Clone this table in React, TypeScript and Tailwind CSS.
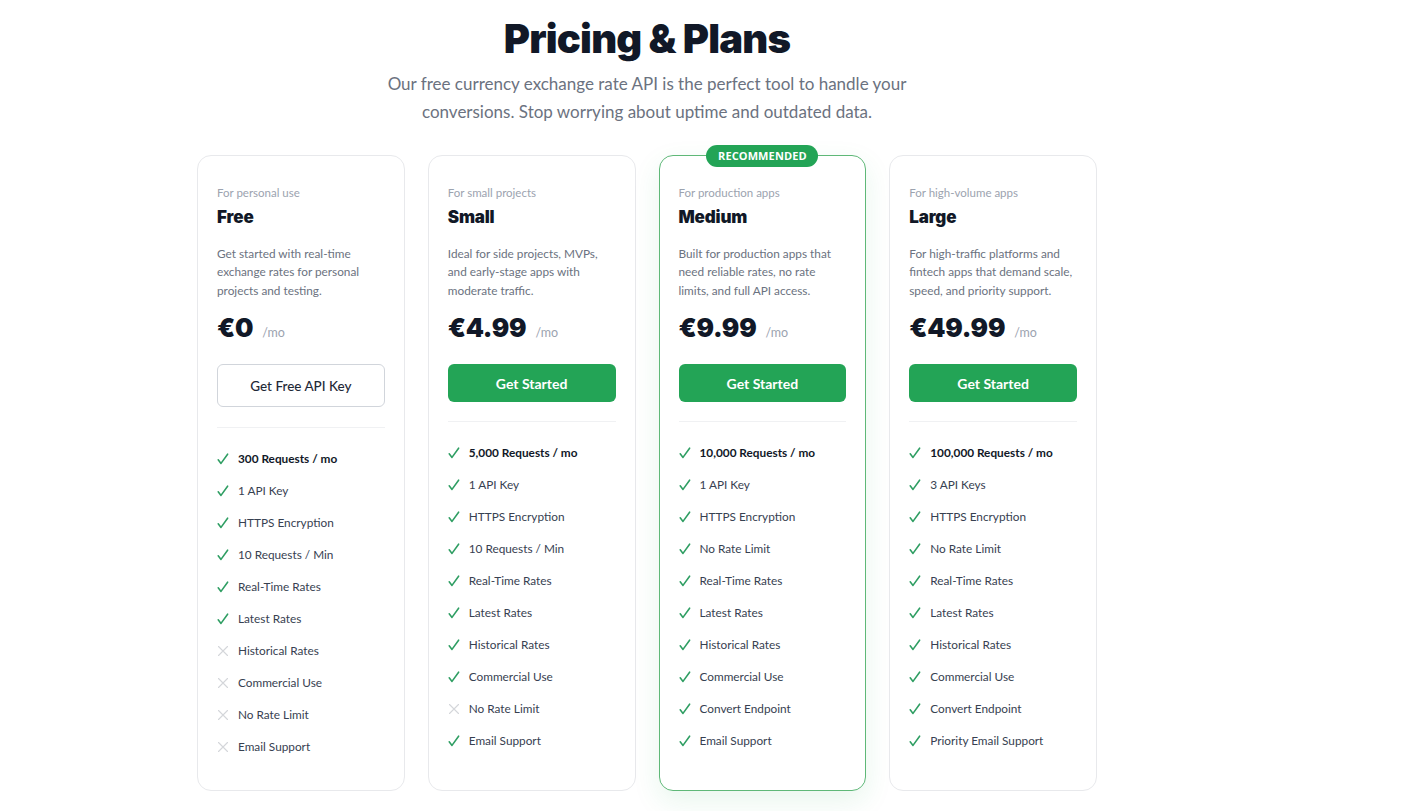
import React from "react";

type Feature = { label: string; ok: boolean; bold?: boolean };
type Plan = {
  tag: string;
  name: string;
  desc: string;
  price: string;
  cta: string;
  primary: boolean;
  recommended?: boolean;
  features: Feature[];
};

const plans: Plan[] = [
  {
    tag: "For personal use",
    name: "Free",
    desc: "Get started with real-time exchange rates for personal projects and testing.",
    price: "€0",
    cta: "Get Free API Key",
    primary: false,
    features: [
      { label: "300 Requests / mo", ok: true, bold: true },
      { label: "1 API Key", ok: true },
      { label: "HTTPS Encryption", ok: true },
      { label: "10 Requests / Min", ok: true },
      { label: "Real-Time Rates", ok: true },
      { label: "Latest Rates", ok: true },
      { label: "Historical Rates", ok: false },
      { label: "Commercial Use", ok: false },
      { label: "No Rate Limit", ok: false },
      { label: "Email Support", ok: false },
    ],
  },
  {
    tag: "For small projects",
    name: "Small",
    desc: "Ideal for side projects, MVPs, and early-stage apps with moderate traffic.",
    price: "€4.99",
    cta: "Get Started",
    primary: true,
    features: [
      { label: "5,000 Requests / mo", ok: true, bold: true },
      { label: "1 API Key", ok: true },
      { label: "HTTPS Encryption", ok: true },
      { label: "10 Requests / Min", ok: true },
      { label: "Real-Time Rates", ok: true },
      { label: "Latest Rates", ok: true },
      { label: "Historical Rates", ok: true },
      { label: "Commercial Use", ok: true },
      { label: "No Rate Limit", ok: false },
      { label: "Email Support", ok: true },
    ],
  },
  {
    tag: "For production apps",
    name: "Medium",
    desc: "Built for production apps that need reliable rates, no rate limits, and full API access.",
    price: "€9.99",
    cta: "Get Started",
    primary: true,
    recommended: true,
    features: [
      { label: "10,000 Requests / mo", ok: true, bold: true },
      { label: "1 API Key", ok: true },
      { label: "HTTPS Encryption", ok: true },
      { label: "No Rate Limit", ok: true },
      { label: "Real-Time Rates", ok: true },
      { label: "Latest Rates", ok: true },
      { label: "Historical Rates", ok: true },
      { label: "Commercial Use", ok: true },
      { label: "Convert Endpoint", ok: true },
      { label: "Email Support", ok: true },
    ],
  },
  {
    tag: "For high-volume apps",
    name: "Large",
    desc: "For high-traffic platforms and fintech apps that demand scale, speed, and priority support.",
    price: "€49.99",
    cta: "Get Started",
    primary: true,
    features: [
      { label: "100,000 Requests / mo", ok: true, bold: true },
      { label: "3 API Keys", ok: true },
      { label: "HTTPS Encryption", ok: true },
      { label: "No Rate Limit", ok: true },
      { label: "Real-Time Rates", ok: true },
      { label: "Latest Rates", ok: true },
      { label: "Historical Rates", ok: true },
      { label: "Commercial Use", ok: true },
      { label: "Convert Endpoint", ok: true },
      { label: "Priority Email Support", ok: true },
    ],
  },
];

const Check = () => (
  <svg width="12" height="12" viewBox="0 0 12 12" className="shrink-0">
    <path d="M1.2 6.8 L4 10.4 L10.6 1.2" fill="none" stroke="#2f9e63" strokeWidth="1.6" strokeLinecap="round" strokeLinejoin="round" />
  </svg>
);

const Cross = () => (
  <svg width="12" height="12" viewBox="0 0 12 12" className="shrink-0">
    <path d="M1.5 1.5 L10.5 10.5 M10.5 1.5 L1.5 10.5" fill="none" stroke="#d4d6da" strokeWidth="1.1" strokeLinecap="round" />
  </svg>
);

function Card({ p }: { p: Plan }) {
  return (
    <div
      className={
        "relative flex flex-col rounded-[14px] bg-white px-[19px] pt-7 pb-[27px] border " +
        (p.recommended
          ? "border-[#5fb878] shadow-[0_10px_28px_rgba(34,164,83,0.10)]"
          : "border-[#e8e9ec]")
      }
    >
      {p.recommended && (
        <div className="absolute left-1/2 -translate-x-1/2 -top-[11px] h-[22px] w-[112px] rounded-full bg-[#23a456] text-white text-[11px] font-bold flex items-center justify-center tracking-[0.01em] font-['Open_Sans',sans-serif]">
          RECOMMENDED
        </div>
      )}
      <div className="text-[11.5px] leading-[18px] text-[#9ca3af] font-['Lato',sans-serif]">{p.tag}</div>
      <div className="mt-[3px] text-[17px] leading-[24px] font-black text-[#111827] font-['Inter',sans-serif] tracking-[-0.01em]">{p.name}</div>
      <p className="mt-4 text-[11.8px] leading-[18.4px] text-[#6b7280] font-['Lato',sans-serif]">{p.desc}</p>
      <div className="mt-[10px] flex items-baseline h-[36px]">
        <span className="text-[26px] leading-[36px] font-black text-[#111827] font-['Inter',sans-serif] tracking-[-0.01em]">{p.price}</span>
        <span className="ml-[9px] text-[12.5px] text-[#9ca3af] font-['Lato',sans-serif]">/mo</span>
      </div>
      {p.primary ? (
        <button className="mt-[18px] h-[38px] w-full rounded-[6px] bg-[#23a456] text-white text-[14px] font-bold font-['Lato',sans-serif]">
          {p.cta}
        </button>
      ) : (
        <button className="mt-[18px] h-[43px] w-full rounded-[6px] border border-[#d1d5db] bg-white text-[#1f2937] text-[13.5px] font-medium font-['Lato',sans-serif]">
          {p.cta}
        </button>
      )}
      <div className={(p.primary ? "mt-[19px]" : "mt-5") + " h-px bg-[#f0f1f3]"} />
      <ul className="mt-[15px] flex flex-col">
        {p.features.map((f) => (
          <li key={f.label} className="h-8 flex items-center gap-[9px]">
            {f.ok ? <Check /> : <Cross />}
            <span
              className={
                "text-[11.8px] font-['Lato',sans-serif] " +
                (f.bold ? "font-bold text-[#111827]" : "text-[#374151]")
              }
            >
              {f.label}
            </span>
          </li>
        ))}
      </ul>
    </div>
  );
}

export default function App() {
  return (
    <div className="min-h-[811px] bg-white flex justify-center pr-[111px]">
      <div className="w-[900px] flex flex-col items-center pt-[13px]">
        <h1 className="text-[40px] leading-[52px] font-black text-[#111827] font-['Inter',sans-serif] tracking-[-0.02em]">
          Pricing &amp; Plans
        </h1>
        <p className="mt-[5px] w-[540px] text-center text-[17px] leading-[28px] text-[#6b7280] font-['Lato',sans-serif]">
          Our free currency exchange rate API is the perfect tool to handle your conversions. Stop worrying about uptime and outdated data.
        </p>
        <div className="mt-[29px] w-full grid grid-cols-4 gap-[23px] items-stretch">
          {plans.map((p) => (
            <Card key={p.name} p={p} />
          ))}
        </div>
      </div>
    </div>
  );
}
